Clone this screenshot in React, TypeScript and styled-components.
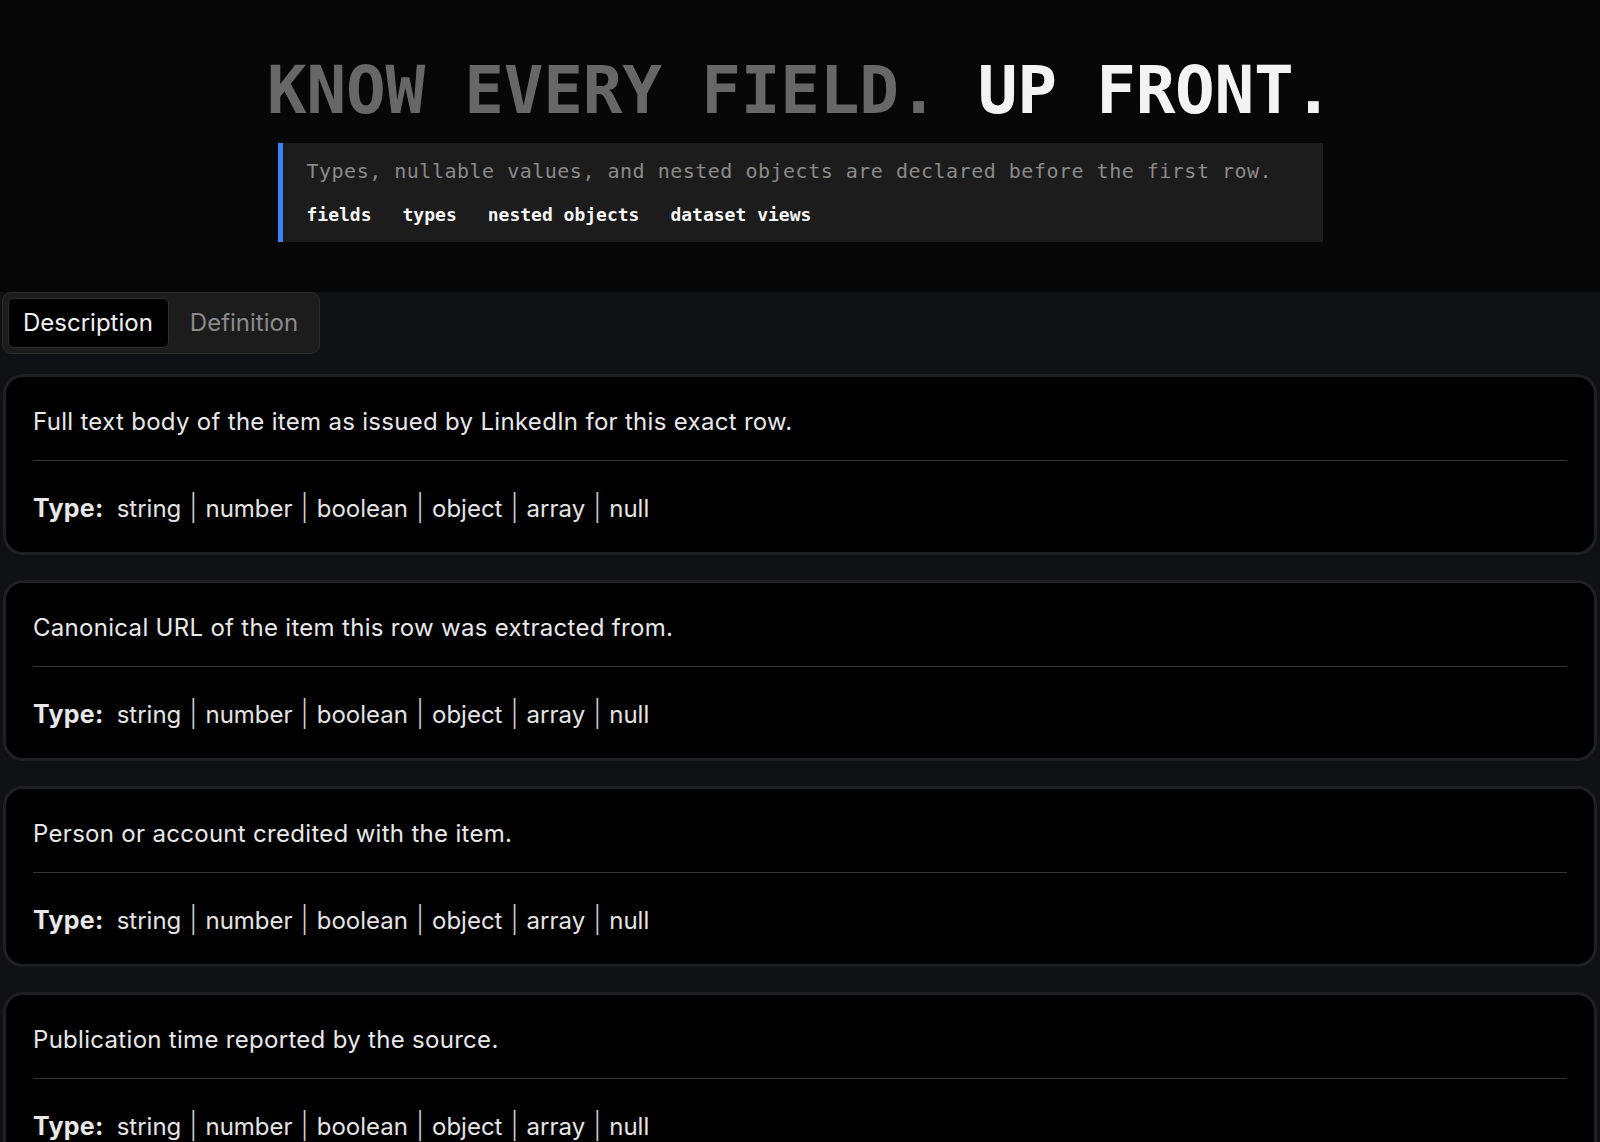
import React from "react";
import styled, { createGlobalStyle } from "styled-components";

const Global = createGlobalStyle`
  html, body { margin: 0; padding: 0; background: #0f1114; }
  body { font-family: Inter, "Noto Sans", sans-serif; color: #e8e8e8; }
  * { box-sizing: border-box; }
`;

const Page = styled.div`
  width: 1600px;
  display: flex;
  flex-direction: column;
`;

const Hero = styled.header`
  background: #070707;
  padding: 51px 0 50px;
  display: flex;
  flex-direction: column;
  align-items: center;
`;

const Heading = styled.h1`
  margin: 0;
  font-family: "DejaVu Sans Mono", "Liberation Mono", monospace;
  font-weight: 700;
  font-size: 66px;
  line-height: 1.2;
  letter-spacing: -0.25px;
  color: #676767;
  white-space: nowrap;
`;

const Bright = styled.span`
  color: #f3f3f3;
`;

const Quote = styled.blockquote`
  margin: 13px 0 0;
  width: 1045px;
  background: #1c1c1c;
  border-left: 5px solid #3b82f6;
  padding: 13px 24px 14px;
  font-family: "DejaVu Sans Mono", "Liberation Mono", monospace;
`;

const QuoteText = styled.p`
  margin: 0;
  font-size: 20px;
  line-height: 30px;
  letter-spacing: 0.5px;
  color: #8a8a8a;
`;

const Tags = styled.div`
  display: flex;
  gap: 31px;
  margin-top: 16px;
`;

const Tag = styled.span`
  font-size: 18px;
  line-height: 25.5px;
  font-weight: 700;
  color: #f5f5f5;
`;

const Main = styled.main`
  background: #0f1114;
  padding: 0 3px 40px;
  display: flex;
  flex-direction: column;
  gap: 25px;
`;

const TabList = styled.div`
  align-self: flex-start;
  margin-left: -1px;
  margin-bottom: -5px;
  display: flex;
  gap: 6px;
  padding: 5px;
  background: #1c1c1c;
  border: 1px solid #2b2b2b;
  border-radius: 9px;
`;

const Tab = styled.button<{ $active?: boolean }>`
  font-family: Inter, "Noto Sans", sans-serif;
  font-size: 24px;
  line-height: 48px;
  height: 50px;
  padding: 0 15px 0 14px;
  border-radius: 6px;
  border: 1px solid ${(p) => (p.$active ? "#2e2e2e" : "transparent")};
  background: ${(p) => (p.$active ? "#000" : "transparent")};
  color: ${(p) => (p.$active ? "#f0f0f0" : "#8a8a8a")};
  cursor: pointer;
`;

const Card = styled.section`
  background: #000;
  border: 3px solid #1f2023;
  border-radius: 20px;
  padding: 27px 27px 25px;
`;

const Desc = styled.p`
  margin: 0;
  font-size: 24px;
  line-height: 36px;
  letter-spacing: 0.3px;
  color: #e8e8e8;
`;

const Divider = styled.hr`
  margin: 20px 0 29px;
  border: 0;
  height: 1px;
  background: #363636;
`;

const TypeRow = styled.div`
  font-size: 24px;
  line-height: 36px;
  color: #e4e4e4;
  display: flex;
  align-items: baseline;
`;

const TypeLabel = styled.strong`
  font-weight: 700;
  font-size: 25px;
  letter-spacing: 0.3px;
  margin-right: 13px;
  color: #e8e8e8;
`;

const Sep = styled.span`
  margin: 0 8px;
  color: #d0d0d0;
  font-size: 26px;
  font-weight: 300;
`;

const types = ["string", "number", "boolean", "object", "array", "null"];

const fields = [
  "Full text body of the item as issued by LinkedIn for this exact row.",
  "Canonical URL of the item this row was extracted from.",
  "Person or account credited with the item.",
  "Publication time reported by the source.",
];

export default function App() {
  return (
    <Page>
      <Global />
      <Hero>
        <Heading>
          KNOW EVERY FIELD. <Bright>UP FRONT.</Bright>
        </Heading>
        <Quote>
          <QuoteText>
            Types, nullable values, and nested objects are declared before the first row.
          </QuoteText>
          <Tags>
            <Tag>fields</Tag>
            <Tag>types</Tag>
            <Tag>nested objects</Tag>
            <Tag>dataset views</Tag>
          </Tags>
        </Quote>
      </Hero>
      <Main>
        <TabList>
          <Tab $active>Description</Tab>
          <Tab>Definition</Tab>
        </TabList>
        {fields.map((f) => (
          <Card key={f}>
            <Desc>{f}</Desc>
            <Divider />
            <TypeRow>
              <TypeLabel>Type:</TypeLabel>
              {types.map((t, i) => (
                <React.Fragment key={t}>
                  {i > 0 && <Sep>|</Sep>}
                  <span>{t}</span>
                </React.Fragment>
              ))}
            </TypeRow>
          </Card>
        ))}
      </Main>
    </Page>
  );
}
